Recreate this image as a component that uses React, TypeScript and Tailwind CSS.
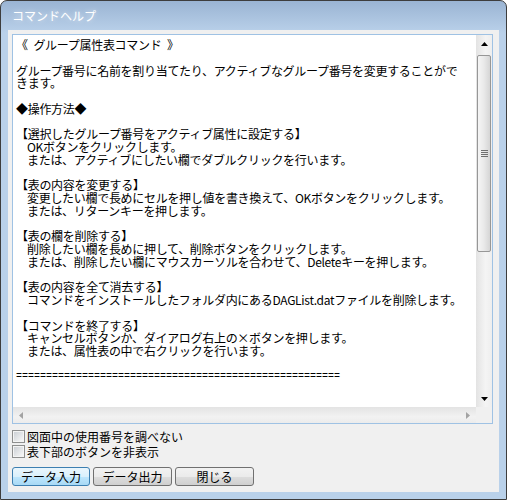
import React from "react";

type Line = { text: string; indent?: boolean; mono?: boolean };

const helpLines: Line[] = [
  { text: "《\u2002グループ属性表コマンド\u2002》" },
  { text: "" },
  { text: "グループ番号に名前を割り当てたり、アクティブなグループ番号を変更することがで" },
  { text: "きます。" },
  { text: "" },
  { text: "◆操作方法◆" },
  { text: "" },
  { text: "【選択したグループ番号をアクティブ属性に設定する】" },
  { text: "OKボタンをクリックします。", indent: true },
  { text: "または、アクティブにしたい欄でダブルクリックを行います。", indent: true },
  { text: "" },
  { text: "【表の内容を変更する】" },
  { text: "変更したい欄で長めにセルを押し値を書き換えて、OKボタンをクリックします。", indent: true },
  { text: "または、リターンキーを押します。", indent: true },
  { text: "" },
  { text: "【表の欄を削除する】" },
  { text: "削除したい欄を長めに押して、削除ボタンをクリックします。", indent: true },
  { text: "または、削除したい欄にマウスカーソルを合わせて、Deleteキーを押します。", indent: true },
  { text: "" },
  { text: "【表の内容を全て消去する】" },
  { text: "コマンドをインストールしたフォルダ内にあるDAGList.datファイルを削除します。", indent: true },
  { text: "" },
  { text: "【コマンドを終了する】" },
  { text: "キャンセルボタンか、ダイアログ右上の×ボタンを押します。", indent: true },
  { text: "または、属性表の中で右クリックを行います。", indent: true },
  { text: "" },
  { text: "======================================================", mono: true },
];

const Arrow = ({ dir, color = "#000" }: { dir: "up" | "down" | "left" | "right"; color?: string }) => {
  const pts = {
    up: "0,4 7,4 3.5,0",
    down: "0,0 7,0 3.5,4",
    left: "4,0 4,7 0,3.5",
    right: "0,0 0,7 4,3.5",
  }[dir];
  const vertical = dir === "up" || dir === "down";
  return (
    <svg width={vertical ? 7 : 4} height={vertical ? 4 : 7} viewBox={vertical ? "0 0 7 4" : "0 0 4 7"}>
      <polygon points={pts} fill={color} />
    </svg>
  );
};

const CheckBox = ({ label }: { label: string }) => (
  <div className="flex h-[15px] items-center">
    <div className="flex h-[13px] w-[13px] items-center justify-center border border-[#8e8f8f] bg-[#f4f4f4]">
      <div className="h-[9px] w-[9px] bg-linear-to-br from-[#cdd1d6] to-[#f7f7f7]" />
    </div>
    <span className="ml-[2px]">{label}</span>
  </div>
);

const Button = ({ label, width, primary }: { label: string; width: string; primary?: boolean }) => (
  <div
    className={`${width} flex h-[19px] items-center justify-center rounded-[3px] border ${
      primary
        ? "border-[#3c7fb1] bg-[linear-gradient(to_bottom,#eaf6fd_0%,#d9f0fc_50%,#bee6fd_51%,#a7d9f5_100%)]"
        : "border-[#707070] bg-[linear-gradient(to_bottom,#f2f2f2_0%,#ebebeb_50%,#dddddd_51%,#cfcfcf_100%)]"
    }`}
  >
    {label}
  </div>
);

export default function App() {
  return (
    <div
      className="flex h-[500px] w-[507px] flex-col overflow-hidden rounded-t-[7px] border border-[#3d3d3d] bg-[linear-gradient(to_bottom,#9ab4d3_0px,#bad1ea_32px,#b9d1ea_100%)] text-[12px] text-black"
      style={{ fontFamily: '"Noto Sans CJK JP", "Noto Sans", sans-serif' }}
    >
      {/* タイトルバー */}
      <div className="flex h-[29px] shrink-0 items-center pl-[11px] text-[12px] text-white [text-shadow:0_0_5px_rgba(255,255,255,0.6)]">
        コマンドヘルプ
      </div>

      {/* クライアント領域 */}
      <div className="mx-[7px] mb-[7px] flex h-[462px] flex-col bg-[#f0f0f0] pl-[4px] pr-[6px] pt-[4px]">
        <div className="flex h-[390px] flex-col border border-[#9fc2e4] bg-white">
          <div className="flex h-[372px]">
            <div className="flex-1 overflow-hidden whitespace-nowrap pl-[3px] pt-[4px] leading-[12.75px] tracking-[-0.3px]">
              {helpLines.map((line, i) => (
                <div
                  key={i}
                  className={`h-[12.75px] ${line.indent ? "pl-[11px]" : ""} ${
                    line.mono ? "text-[10px] tracking-normal" : ""
                  }`}
                  style={line.mono ? { fontFamily: '"Liberation Mono", monospace' } : undefined}
                >
                  {line.text}
                </div>
              ))}
            </div>
            {/* 縦スクロールバー */}
            <div className="flex w-[16px] flex-col bg-[linear-gradient(to_right,#e3e3e3,#f4f4f4_60%,#eeeeee)]">
              <div className="flex h-[17px] items-center justify-center">
                <Arrow dir="up" />
              </div>
              <div className="flex-1 px-px pt-[3px]">
                <div className="flex h-[197px] items-center justify-center rounded-[2px] border border-[#979797] bg-[linear-gradient(to_right,#f5f5f5,#e9e9e9_50%,#d5d5d5)]">
                  <div className="flex flex-col gap-px">
                    <div className="h-px w-[7px] bg-[#6f6f6f]" />
                    <div className="h-px w-[7px] bg-[#6f6f6f]" />
                    <div className="h-px w-[7px] bg-[#6f6f6f]" />
                    <div className="h-px w-[7px] bg-[#6f6f6f]" />
                  </div>
                </div>
              </div>
              <div className="flex h-[17px] items-center justify-center">
                <Arrow dir="down" />
              </div>
            </div>
          </div>
          {/* 横スクロールバー */}
          <div className="flex h-[16px]">
            <div className="flex flex-1 items-center justify-between bg-[linear-gradient(to_bottom,#e3e3e3,#f2f2f2_60%,#ececec)] px-[6px]">
              <Arrow dir="left" color="#a3a3a3" />
              <Arrow dir="right" color="#a3a3a3" />
            </div>
            <div className="w-[16px] bg-[#f0f0f0]" />
          </div>
        </div>

        <div className="mt-[5px] flex flex-col">
          <CheckBox label="図面中の使用番号を調べない" />
          <CheckBox label="表下部のボタンを非表示" />
        </div>

        <div className="mt-[8px] flex gap-[3px]">
          <Button label="データ入力" width="w-[78px]" primary />
          <Button label="データ出力" width="w-[79px]" />
          <Button label="閉じる" width="w-[79px]" />
        </div>
      </div>
    </div>
  );
}
